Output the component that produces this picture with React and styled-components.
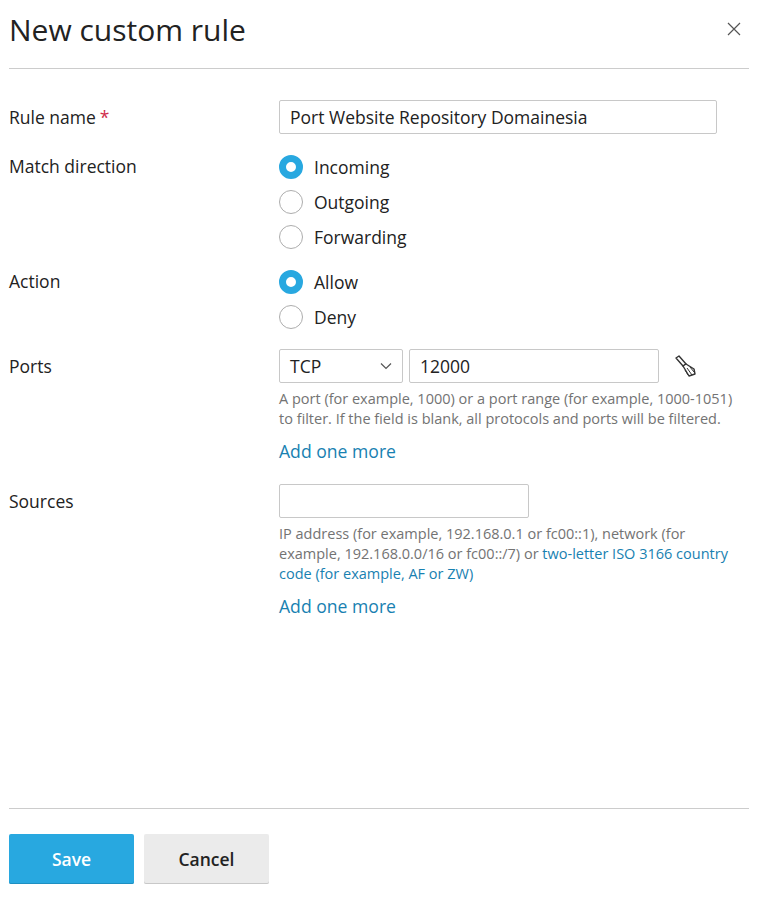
import React from "react";
import styled, { createGlobalStyle } from "styled-components";

const Global = createGlobalStyle`
  body { margin: 0; font-family: "Open Sans", sans-serif; color: #222; background: #fff; }
`;
const Page = styled.div`
  height: 899px; display: flex; flex-direction: column; padding: 0 14px 0 9px; box-sizing: border-box;
`;
const Header = styled.div`
  height: 68px; border-bottom: 1px solid #ccc; display: flex; align-items: flex-start; justify-content: space-between;
`;
const Title = styled.h1`
  margin: 10px 0 0; font-size: 30px; font-weight: 400; line-height: 40px; color: #222;
`;
const Close = styled.button`
  border: 0; background: none; padding: 0; margin: 20px 6px 0 0; width: 18px; height: 18px; cursor: pointer;
`;
const Body = styled.div`
  flex: 1; padding-top: 31px;
`;
const Row = styled.div`
  display: grid; grid-template-columns: 270px 1fr; margin-top: ${p => p.$mt || 0}px;
`;
const Label = styled.div`
  font-size: 17.5px; line-height: ${p => p.$lh}px; color: #222;
`;
const Req = styled.span` color: #d02d4b; margin-left: 4px; `;
const Input = styled.input`
  box-sizing: border-box; height: 34px; width: ${p => p.$w}px; border: 1px solid #c8c8c8; border-radius: 2px;
  font: 17.5px "Open Sans", sans-serif; color: #222; padding: 0 10px; outline: none;
`;
const RadioItem = styled.label`
  display: flex; align-items: center; height: 35px; font-size: 17.5px; color: #222; gap: 11px;
`;
const Dot = styled.span`
  box-sizing: border-box; width: 24px; height: 24px; border-radius: 50%;
  border: ${p => p.$on ? "7px solid #28a8e0" : "1px solid #adadad"}; background: #fff;
`;
const Line = styled.div` display: flex; align-items: center; gap: 6px; `;
const Select = styled.div`
  box-sizing: border-box; width: 124px; height: 34px; border: 1px solid #c8c8c8; border-radius: 2px;
  display: flex; align-items: center; justify-content: space-between; padding: 0 10px; font-size: 17.5px;
`;
const Hint = styled.div`
  font-size: 14.5px; line-height: 20px; color: #737373; margin-top: 6px; max-width: 472px;
`;
const A = styled.a` color: #1881b1; text-decoration: none; `;
const More = styled.a`
  display: block; color: #1881b1; font-size: 17.6px; line-height: 24px; margin-top: 10px;
`;
const Footer = styled.div`
  border-top: 1px solid #ccc; padding: 25px 0 15px; display: flex; gap: 10px;
`;
const Btn = styled.button`
  width: 125px; height: 50px; border: 0; border-radius: 2px; font: 600 17.5px "Open Sans", sans-serif;
  background: ${p => p.$primary ? "#28a8e0" : "#ebebeb"}; color: ${p => p.$primary ? "#fff" : "#222"};
  box-shadow: inset 0 -1px 0 ${p => p.$primary ? "#1e8fc1" : "#c8c8c8"};
`;

const Radio = ({ on, children }) => (
  <RadioItem><Dot $on={on} />{children}</RadioItem>
);

export default function App() {
  return (
    <Page>
      <Global />
      <Header>
        <Title>New custom rule</Title>
        <Close aria-label="close">
          <svg width="18" height="18" viewBox="0 0 18 18"><path d="M3 3L15 15M15 3L3 15" stroke="#555" strokeWidth="1.2" /></svg>
        </Close>
      </Header>
      <Body>
        <Row>
          <Label $lh={34}>Rule name<Req>*</Req></Label>
          <Input $w={438} defaultValue="Port Website Repository Domainesia" />
        </Row>
        <Row $mt={15}>
          <Label $lh={35}>Match direction</Label>
          <div>
            <Radio on>Incoming</Radio>
            <Radio>Outgoing</Radio>
            <Radio>Forwarding</Radio>
          </div>
        </Row>
        <Row $mt={10}>
          <Label $lh={35}>Action</Label>
          <div>
            <Radio on>Allow</Radio>
            <Radio>Deny</Radio>
          </div>
        </Row>
        <Row $mt={15}>
          <Label $lh={34}>Ports</Label>
          <div>
            <Line>
              <Select>TCP
                <svg width="12" height="8" viewBox="0 0 12 8"><path d="M1 1.5L6 6.5L11 1.5" fill="none" stroke="#555" strokeWidth="1.2" /></svg>
              </Select>
              <Input $w={250} defaultValue="12000" />
              <svg style={{ marginLeft: 8 }} width="26" height="26" viewBox="0 0 26 26">
                <g fill="none" stroke="#333" strokeWidth="1.4" strokeLinejoin="round">
                  <path d="M3 5L6 3L13 11L10 13Z" />
                  <path d="M10 13L13 11L21 16L22 21L16 23Z" fill="#fff" />
                  <path d="M14 15L19 22M17 14L21 19M12 17L15 22" strokeWidth="1" />
                </g>
              </svg>
            </Line>
            <Hint>A port (for example, 1000) or a port range (for example, 1000-1051) to filter. If the field is blank, all protocols and ports will be filtered.</Hint>
            <More>Add one more</More>
          </div>
        </Row>
        <Row $mt={21}>
          <Label $lh={34}>Sources</Label>
          <div>
            <Input $w={250} />
            <Hint>IP address (for example, 192.168.0.1 or fc00::1), network (for example, 192.168.0.0/16 or fc00::/7) or <A href="#">two-letter ISO 3166 country code (for example, AF or ZW)</A></Hint>
            <More>Add one more</More>
          </div>
        </Row>
      </Body>
      <Footer>
        <Btn $primary>Save</Btn>
        <Btn>Cancel</Btn>
      </Footer>
    </Page>
  );
}
